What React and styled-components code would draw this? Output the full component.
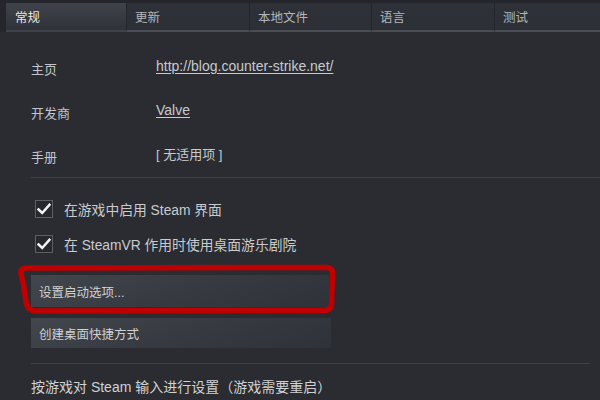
import React from "react"
import styled, { createGlobalStyle } from "styled-components"

const GlobalStyle = createGlobalStyle`
  html, body {
    margin: 0;
    padding: 0;
    background: #2a2c32;
  }
`

const Window = styled.div`
  width: 600px;
  height: 400px;
  overflow: hidden;
  background: #2a2c32;
  font-family: "Liberation Sans", "Noto Sans CJK SC", sans-serif;
  font-size: 13px;
  color: #c6c8cc;
`

const TabBar = styled.div`
  display: flex;
  height: 32px;
  box-sizing: border-box;
  padding: 3px 0 0 6px;
  background: #24262b;
`

const Tab = styled.div`
  width: ${({ $w }) => ($w ? `${$w}px` : "auto")};
  flex: ${({ $w }) => ($w ? "none" : 1)};
  box-sizing: border-box;
  display: flex;
  align-items: center;
  padding: 0 0 0 8px;
  font-size: 12.5px;
  color: ${({ $active }) => ($active ? "#e6e7e9" : "#b3b6ba")};
  background: ${({ $active }) =>
    $active
      ? "linear-gradient(to bottom, #40434a, #2f3238)"
      : "linear-gradient(to bottom, #2e3137, #2c2f35)"};
  border-left: 1px solid ${({ $active }) => ($active ? "transparent" : "#24262b")};
  border-bottom: 2px solid ${({ $active }) => ($active ? "transparent" : "#4a4d53")};
`

const Content = styled.div`
  padding: 13px 0 0 31px;
`

const InfoGrid = styled.div`
  display: grid;
  grid-template-columns: 125px 1fr;
  grid-auto-rows: 44px;
  align-items: center;
`

const Label = styled.div`
  color: #c3c5c9;
  padding-top: 3px;
`

const Value = styled.div`
  color: #c8cacd;
  padding-bottom: 3px;
  font-size: ${({ $link }) => ($link ? "14px" : "13px")};
  text-decoration: ${({ $link }) => ($link ? "underline" : "none")};
  text-underline-offset: 2px;
`

const Divider = styled.div`
  height: 1px;
  background: #3e4147;
  margin: ${({ $m }) => $m};
  margin-right: ${({ $r }) => $r}px;
`

const CheckRow = styled.label`
  display: flex;
  align-items: center;
  gap: 11px;
  padding-left: 4px;
  height: 18px;
  margin-top: ${({ $top }) => $top}px;
  color: #c9cbce;
  font-size: 13.8px;
`

const Box = styled.span`
  width: 18px;
  height: 18px;
  box-sizing: border-box;
  border: 1px solid #5c5f64;
  background: #26282d;
  display: flex;
  align-items: center;
  justify-content: center;
`

const ButtonWrap = styled.div`
  position: relative;
  width: ${({ $w }) => $w}px;
  margin-top: ${({ $top }) => $top}px;
`

const Button = styled.div`
  height: ${({ $h }) => $h}px;
  box-sizing: border-box;
  display: flex;
  align-items: center;
  padding-left: 8px;
  color: #cfd1d4;
  font-size: 12.5px;
  background: linear-gradient(160deg, #42464d 0%, #373a41 50%, #2f3238 100%);
`

const Marker = styled.svg`
  position: absolute;
  left: -16px;
  top: -13px;
  pointer-events: none;
`

const Footer = styled.div`
  color: #d0d2d5;
  font-size: 14px;
  margin-top: 12px;
`

const Check = () => (
  <svg width="14" height="12" viewBox="0 0 14 12">
    <path d="M1.5 6.5 L5.2 10 L12.5 1.8" fill="none" stroke="#f2f2f2" strokeWidth="2.6" strokeLinecap="square" />
  </svg>
)

const tabs = [
  { name: "常规", w: 120, active: true },
  { name: "更新", w: 123 },
  { name: "本地文件", w: 122 },
  { name: "语言", w: 123 },
  { name: "测试" },
]

const App = () => {
  return (
    <Window>
      <GlobalStyle />
      <TabBar>
        {tabs.map((t) => (
          <Tab key={t.name} $w={t.w} $active={t.active}>{t.name}</Tab>
        ))}
      </TabBar>
      <Content>
        <InfoGrid>
          <Label>主页</Label>
          <Value $link>http://blog.counter-strike.net/</Value>
          <Label>开发商</Label>
          <Value $link>Valve</Value>
          <Label>手册</Label>
          <Value>[ 无适用项 ]</Value>
        </InfoGrid>
        <Divider $m="0" $r={0} />
        <CheckRow $top={22}>
          <Box><Check /></Box>
          在游戏中启用 Steam 界面
        </CheckRow>
        <CheckRow $top={17}>
          <Box><Check /></Box>
          在 SteamVR 作用时使用桌面游乐剧院
        </CheckRow>
        <ButtonWrap $top={22} $w={298}>
          <Button $h={32}>设置启动选项...</Button>
          {/* red hand-drawn annotation over the button */}
          <Marker width="326" height="58" viewBox="0 0 326 58">
            <path
              d="M10 6 L312 5.5 Q318 5.5 317.5 12 L316.5 42 Q316 48.5 309 48.5 L21 49 Q12 48.5 11 40 L9 26 Q8 18 6 12 Q5 7 10 6 Z"
              fill="none"
              stroke="#c00000"
              strokeWidth="5.5"
              strokeLinejoin="round"
            />
          </Marker>
        </ButtonWrap>
        <ButtonWrap $top={11} $w={300}>
          <Button $h={30}>创建桌面快捷方式</Button>
        </ButtonWrap>
        <Divider $m="15px 0 0 0" $r={10} />
        <Footer>按游戏对 Steam 输入进行设置（游戏需要重启）</Footer>
      </Content>
    </Window>
  )
}

export default App
